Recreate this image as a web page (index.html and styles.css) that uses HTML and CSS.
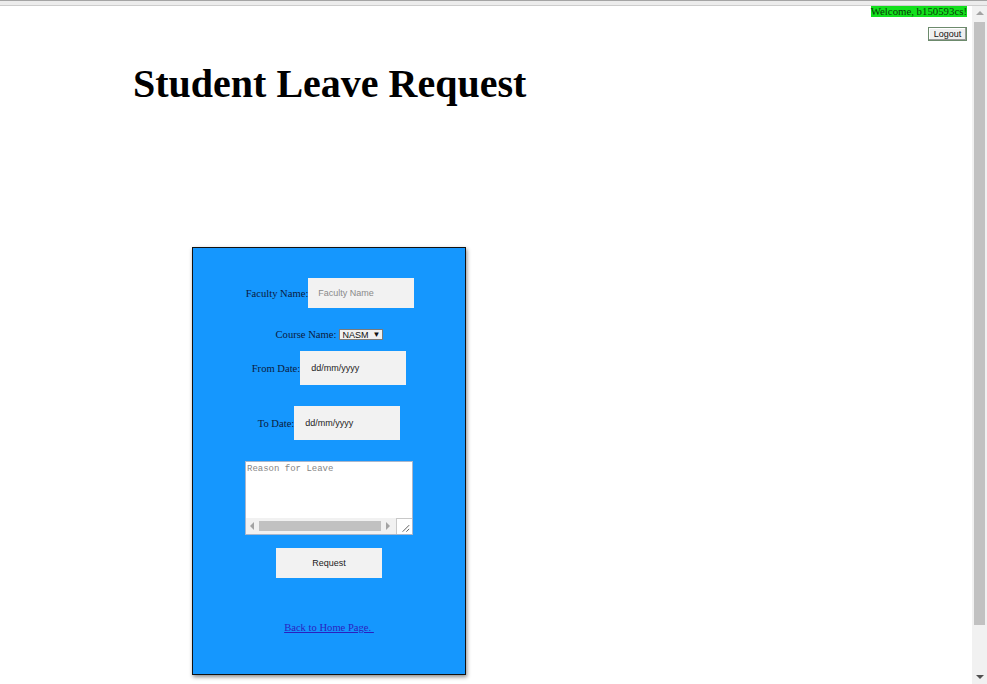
FILE: index.html
```html
<!DOCTYPE html>
<html lang="en">
<head>
<meta charset="utf-8">
<title>Student Leave Request</title>
<link rel="stylesheet" href="styles.css">
</head>
<body>
<div class="strip"></div>
<div class="viewport">
  <div class="page">
    <div class="userbar">
      <span class="welcome">Welcome, b150593cs!</span>
      <button class="logout" type="button">Logout</button>
    </div>
    <h1 class="title">Student Leave Request</h1>
    <div class="card">
      <div class="row row-faculty">
        <label class="lbl">Faculty Name:</label>
        <input class="field field-faculty" type="text" placeholder="Faculty Name">
      </div>
      <div class="row row-course">
        <label class="lbl">Course Name:</label>
        <span class="select"><span class="select-text">NASM</span><span class="select-arrow">&#9660;</span></span>
      </div>
      <div class="row row-from">
        <label class="lbl">From Date:</label>
        <input class="field field-date" type="text" placeholder="dd/mm/yyyy">
      </div>
      <div class="row row-to">
        <label class="lbl">To Date:</label>
        <input class="field field-date" type="text" placeholder="dd/mm/yyyy">
      </div>
      <div class="row row-reason">
        <div class="reason">
          <textarea class="reason-text" placeholder="Reason for Leave"></textarea>
          <div class="hscroll">
            <span class="hs-arrow hs-left"></span>
            <span class="hs-thumb"></span>
            <span class="hs-arrow hs-right"></span>
            <span class="hs-corner">
              <svg width="16" height="16" viewBox="0 0 16 16"><path d="M13 6 L6 13 M13 10 L10 13" stroke="#555" stroke-width="1" fill="none"/></svg>
            </span>
          </div>
        </div>
      </div>
      <div class="row row-btn">
        <button class="request" type="button">Request</button>
      </div>
      <div class="row row-link">
        <a class="home" href="#">Back to Home Page. </a>
      </div>
    </div>
  </div>
  <div class="vscroll">
    <span class="vs-up"></span>
    <span class="vs-thumb"></span>
    <span class="vs-fill"></span>
    <span class="vs-down"></span>
  </div>
</div>
</body>
</html>
```

FILE: styles.css
```css
html, body {
  margin: 0;
  padding: 0;
  height: 684px;
  overflow: hidden;
  background: #ffffff;
  font-family: "Liberation Serif", "Times New Roman", serif;
}

.strip {
  height: 4px;
  border-top: 1px solid #a4a4a4;
  border-bottom: 1px solid #cdcdcd;
  background: #ececec;
}

.viewport {
  display: flex;
  height: 678px;
}

.page {
  flex: 1;
  min-width: 0;
}

.userbar {
  display: flex;
  flex-direction: column;
  align-items: flex-end;
  padding-right: 5px;
}

.welcome {
  display: block;
  background: #12e01c;
  color: #0a3a0a;
  font-size: 10.8px;
  line-height: 11px;
  height: 11px;
  padding: 0;
  white-space: nowrap;
}

.logout {
  margin-top: 10px;
  width: 39px;
  height: 14px;
  padding: 0;
  font-family: "Liberation Sans", Arial, sans-serif;
  font-size: 9px;
  color: #111;
  background: #efefef;
  border: 1px solid #6c8a6c;
  box-shadow: inset -1px -1px 0 #9a9a9a, inset 1px 1px 0 #fff;
}

.title {
  margin: 19px 0 0 133px;
  font-size: 40px;
  line-height: 48px;
  font-weight: bold;
  color: #000;
}

.card {
  width: 272px;
  margin: 139px 0 0 192px;
  background: #1597fe;
  border: 1px solid #111;
  box-shadow: 1px 2px 4px rgba(0, 0, 0, 0.45);
  padding-top: 30px;
  box-sizing: content-box;
  height: 396px;
}

.row {
  display: flex;
  justify-content: center;
  align-items: center;
}

.lbl {
  font-size: 10.6px;
  color: #0b1a40;
  white-space: nowrap;
}

.field {
  box-sizing: border-box;
  width: 106px;
  border: 0;
  margin: 0;
  background: #f2f2f2;
  padding: 0 10px;
  font-family: "Liberation Sans", Arial, sans-serif;
  font-size: 9px;
  outline: none;
}

.field-faculty {
  height: 30px;
}

.field-faculty::placeholder {
  color: #8a8a8a;
}

.field-date {
  height: 34px;
  padding-left: 11px;
}

.field-date::placeholder {
  color: #222;
}

.row-faculty {
  height: 30px;
  padding-left: 2px;
}

.row-course {
  margin-top: 21px;
  height: 11px;
  padding-left: 1px;
}

.row-course .lbl {
  margin-right: 3px;
}

.select {
  display: inline-flex;
  align-items: center;
  box-sizing: border-box;
  width: 44px;
  height: 11px;
  border: 1px solid #7a7a7a;
  background: #f0f0f0;
  font-family: "Liberation Sans", Arial, sans-serif;
  font-size: 9px;
  color: #111;
  padding-left: 2px;
}

.select-text {
  flex: 1;
}

.select-arrow {
  font-size: 8px;
  padding-right: 2px;
}

.row-from {
  margin-top: 11px;
  height: 34px;
}

.row-to {
  margin-top: 21px;
  height: 34px;
}

.row-reason {
  margin-top: 21px;
}

.reason {
  box-sizing: border-box;
  width: 168px;
  height: 74px;
  border: 1px solid #a9b6cc;
  background: #fff;
  display: flex;
  flex-direction: column;
}

.reason-text {
  flex: 1;
  border: 0;
  margin: 0;
  padding: 2px 1px 0;
  resize: none;
  outline: none;
  font-family: "Liberation Mono", "DejaVu Sans Mono", monospace;
  font-size: 9px;
  background: transparent;
}

.reason-text::placeholder {
  color: #858585;
}

.hscroll {
  height: 16px;
  display: flex;
  align-items: center;
  background: #f1f1f1;
}

.hs-arrow {
  width: 0;
  height: 0;
  border-top: 4px solid transparent;
  border-bottom: 4px solid transparent;
}

.hs-left {
  border-right: 4px solid #a3a3a3;
  margin: 0 5px 0 4px;
}

.hs-right {
  border-left: 4px solid #a3a3a3;
  margin: 0 6px 0 5px;
}

.hs-thumb {
  width: 122px;
  height: 10px;
  background: #c1c1c1;
}

.hs-corner {
  margin-left: auto;
  width: 16px;
  height: 16px;
  background: #fff;
  border-left: 1px solid #c8c8c8;
  border-top: 1px solid #c8c8c8;
  box-sizing: border-box;
  display: flex;
}

.row-btn {
  margin-top: 13px;
}

.request {
  width: 106px;
  height: 30px;
  border: 0;
  padding: 0;
  background: #f2f2f2;
  font-family: "Liberation Sans", Arial, sans-serif;
  font-size: 9px;
  color: #222;
}

.row-link {
  margin-top: 44px;
}

.home {
  font-size: 10.6px;
  color: #2b1fbf;
  text-decoration: underline;
  white-space: pre;
}

.vscroll {
  width: 15px;
  background: #f1f1f1;
  display: flex;
  flex-direction: column;
  align-items: center;
}

.vs-up {
  width: 0;
  height: 0;
  margin-top: 5px;
  border-left: 4px solid transparent;
  border-right: 4px solid transparent;
  border-bottom: 4px solid #a3a3a3;
}

.vs-thumb {
  margin-top: 7px;
  width: 11px;
  height: 603px;
  background: #c1c1c1;
}

.vs-fill {
  flex: 1;
}

.vs-down {
  width: 0;
  height: 0;
  margin-bottom: 5px;
  border-left: 4px solid transparent;
  border-right: 4px solid transparent;
  border-top: 4px solid #505050;
}
```
